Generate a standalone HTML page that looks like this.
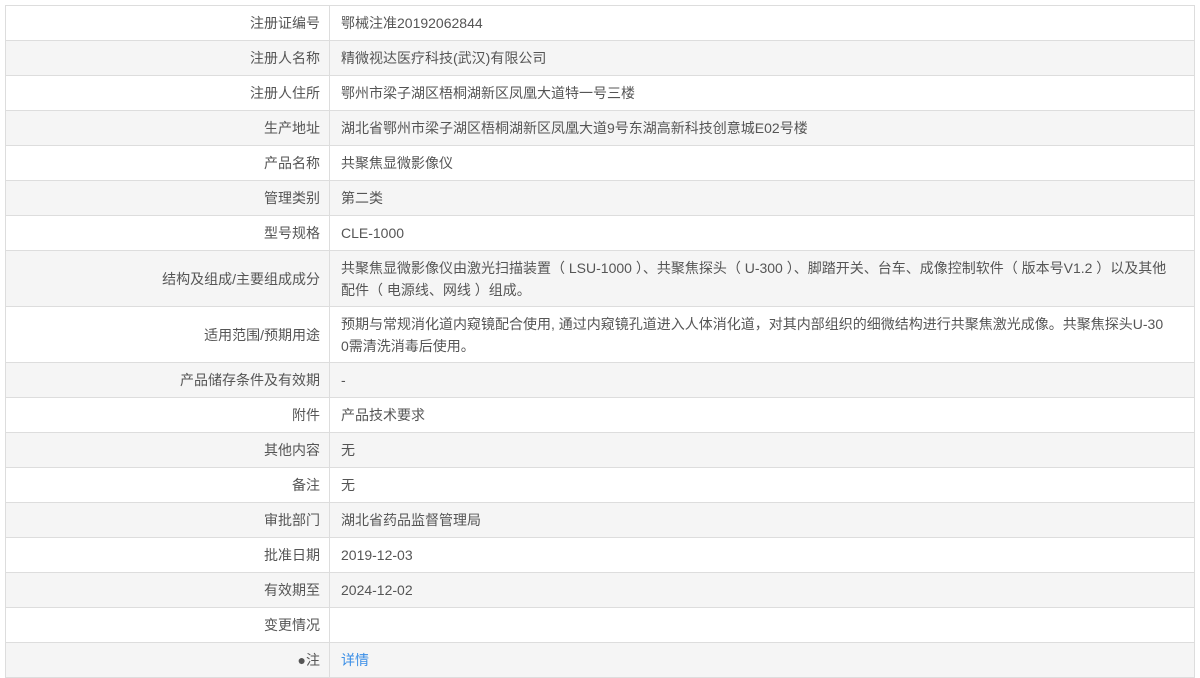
<!DOCTYPE html><html><head><meta charset="utf-8"><style>
body{margin:0;background:#fff;font-family:"Liberation Sans","Noto Sans CJK SC",sans-serif;font-size:14px;color:#555;}
table{position:absolute;left:5px;top:5px;width:1190px;border-collapse:collapse;}
td{border:1px solid #ddd;height:34px;padding:0 10px;line-height:22px;}
td.l{width:304px;text-align:right;padding-right:9px;}
tr:nth-child(even) td{background:#f5f5f5;}
td.v{padding-left:11px;white-space:nowrap;}
tr.t td{height:55px;}
a{color:#3a8ee6;text-decoration:none;}
</style></head><body>
<table>
<tr><td class="l">注册证编号</td><td class="v">鄂械注准20192062844</td></tr>
<tr><td class="l">注册人名称</td><td class="v">精微视达医疗科技(武汉)有限公司</td></tr>
<tr><td class="l">注册人住所</td><td class="v">鄂州市梁子湖区梧桐湖新区凤凰大道特一号三楼</td></tr>
<tr><td class="l">生产地址</td><td class="v">湖北省鄂州市梁子湖区梧桐湖新区凤凰大道9号东湖高新科技创意城E02号楼</td></tr>
<tr><td class="l">产品名称</td><td class="v">共聚焦显微影像仪</td></tr>
<tr><td class="l">管理类别</td><td class="v">第二类</td></tr>
<tr><td class="l">型号规格</td><td class="v">CLE-1000</td></tr>
<tr class="t"><td class="l">结构及组成/主要组成成分</td><td class="v">共聚焦显微影像仪由激光扫描装置（ LSU-1000 ）、共聚焦探头（ U-300 ）、脚踏开关、台车、成像控制软件（ 版本号V1.2 ）以及其他<br>配件（ 电源线、网线 ）组成。</td></tr>
<tr class="t"><td class="l">适用范围/预期用途</td><td class="v">预期与常规消化道内窥镜配合使用, 通过内窥镜孔道进入人体消化道，对其内部组织的细微结构进行共聚焦激光成像。共聚焦探头U-30<br>0需清洗消毒后使用。</td></tr>
<tr><td class="l">产品储存条件及有效期</td><td class="v">-</td></tr>
<tr><td class="l">附件</td><td class="v">产品技术要求</td></tr>
<tr><td class="l">其他内容</td><td class="v">无</td></tr>
<tr><td class="l">备注</td><td class="v">无</td></tr>
<tr><td class="l">审批部门</td><td class="v">湖北省药品监督管理局</td></tr>
<tr><td class="l">批准日期</td><td class="v">2019-12-03</td></tr>
<tr><td class="l">有效期至</td><td class="v">2024-12-02</td></tr>
<tr><td class="l">变更情况</td><td class="v"></td></tr>
<tr><td class="l"><span style="color:#555">●</span>注</td><td class="v"><a>详情</a></td></tr>
</table>
</body></html>
